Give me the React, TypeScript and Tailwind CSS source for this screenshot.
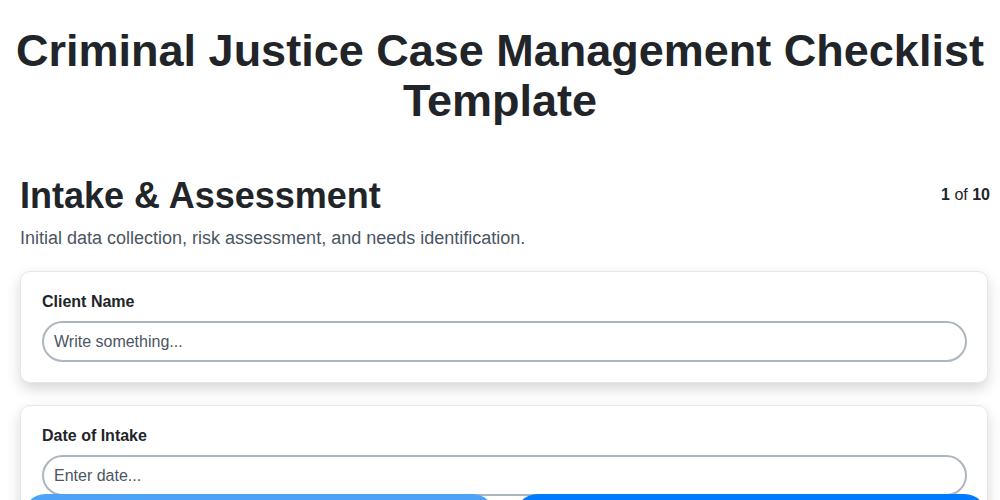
import React from "react";

export default function App() {
  return (
    <div className="min-h-[500px] bg-white text-[#212529]" style={{ fontFamily: '"Liberation Sans", Arial, sans-serif' }}>
      <div className="px-[10px] pt-[26px]">
        <h1 className="text-center text-[45px] font-bold leading-[50px] text-[#212529]">
          Criminal Justice Case Management Checklist Template
        </h1>
        <div className="pl-[10px]">
          <div className="mt-[48px] flex items-start justify-between">
            <h2 className="text-[36px] font-bold leading-[44px]">Intake &amp; Assessment</h2>
            <div className="pt-[9px] text-[16px]">
              <span className="font-bold">1</span> of <span className="font-bold">10</span>
            </div>
          </div>
          <p className="mt-[8px] text-[18px] leading-[24px] text-[#4b5563]">
            Initial data collection, risk assessment, and needs identification.
          </p>
          <div className="mt-[21px] flex w-[968px] flex-col gap-[22px]">
            <div className="rounded-[10px] border border-[#e5e7eb] bg-white pl-[21px] pr-[20px] pt-[20px] pb-[20px] shadow-[0_6px_14px_rgba(0,0,0,0.16)]">
              <label className="block text-[16px] font-bold leading-[20px]">Client Name</label>
              <input
                className="mt-[9px] h-[41px] w-full rounded-full border-2 border-[#adb5bd] px-[10px] text-[16px] text-[#212529] outline-none placeholder:text-[#4b5563]"
                placeholder="Write something..."
                style={{ fontFamily: '"Liberation Sans", Arial, sans-serif' }}
              />
            </div>
            <div className="rounded-[10px] border border-[#e5e7eb] bg-white pl-[21px] pr-[20px] pt-[20px] pb-[20px] shadow-[0_6px_14px_rgba(0,0,0,0.16)]">
              <label className="block text-[16px] font-bold leading-[20px]">Date of Intake</label>
              <input
                className="mt-[9px] h-[41px] w-full rounded-full border-2 border-[#adb5bd] px-[10px] text-[16px] text-[#212529] outline-none placeholder:text-[#4b5563]"
                placeholder="Enter date..."
                style={{ fontFamily: '"Liberation Sans", Arial, sans-serif' }}
              />
            </div>
          </div>
        </div>
      </div>
      <div className="fixed left-0 right-0 top-[494px] flex gap-[18px] pl-[22px] pr-[12px]">
        <button aria-label="Previous" className="h-[48px] flex-1 rounded-full bg-[#4da3f8]"></button>
        <button aria-label="Next" className="h-[48px] flex-1 rounded-full bg-[#007bff]"></button>
      </div>
    </div>
  );
}
